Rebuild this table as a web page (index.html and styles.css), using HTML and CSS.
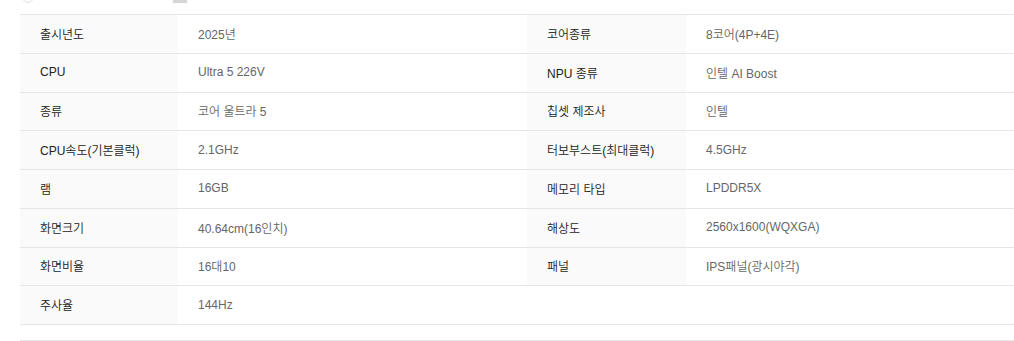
FILE: index.html
```html
<!DOCTYPE html>
<html lang="ko">
<head>
<meta charset="utf-8">
<link rel="stylesheet" href="styles.css">
</head>
<body>
<div class="top">
  <span class="dot"></span>
  <span class="tab"></span>
</div>
<div class="spec">
  <div class="row">
    <div class="th">출시년도</div><div class="td">2025년</div>
    <div class="th">코어종류</div><div class="td">8코어(4P+4E)</div>
  </div>
  <div class="row">
    <div class="th">CPU</div><div class="td">Ultra 5 226V</div>
    <div class="th">NPU 종류</div><div class="td">인텔 AI Boost</div>
  </div>
  <div class="row">
    <div class="th">종류</div><div class="td">코어 울트라 5</div>
    <div class="th">칩셋 제조사</div><div class="td">인텔</div>
  </div>
  <div class="row">
    <div class="th">CPU속도(기본클럭)</div><div class="td">2.1GHz</div>
    <div class="th">터보부스트(최대클럭)</div><div class="td">4.5GHz</div>
  </div>
  <div class="row">
    <div class="th">램</div><div class="td">16GB</div>
    <div class="th">메모리 타입</div><div class="td">LPDDR5X</div>
  </div>
  <div class="row">
    <div class="th">화면크기</div><div class="td">40.64cm(16인치)</div>
    <div class="th">해상도</div><div class="td">2560x1600(WQXGA)</div>
  </div>
  <div class="row">
    <div class="th">화면비율</div><div class="td">16대10</div>
    <div class="th">패널</div><div class="td">IPS패널(광시야각)</div>
  </div>
  <div class="row">
    <div class="th">주사율</div><div class="td">144Hz</div>
    <div class="blank"></div><div class="blank"></div>
  </div>
</div>
<div class="next"></div>
</body>
</html>
```

FILE: styles.css
```css
* { box-sizing: border-box; }
html, body {
  margin: 0;
  padding: 0;
  background: #fff;
}
body {
  font-family: "Liberation Sans", "Noto Sans CJK KR", sans-serif;
  font-size: 12px;
  font-weight: 350;
  color: #333;
}
.top {
  height: 14px;
  overflow: hidden;
  display: flex;
  align-items: flex-start;
  padding-left: 22px;
}
.dot {
  width: 12px;
  height: 12px;
  border-radius: 50%;
  border: 1px solid #e2e2e2;
  margin-top: -9px;
}
.tab {
  width: 14px;
  height: 3px;
  background: #d6d6d6;
  margin-left: 139px;
}
.spec {
  margin-left: 20px;
  border-top: 1px solid #e6e6e6;
}
.row {
  display: grid;
  grid-template-columns: 158px 349px 159px 1fr;
  height: 38.75px;
  border-bottom: 1px solid #e6e6e6;
}
.th, .td {
  display: flex;
  align-items: center;
  padding-left: 20px;
  padding-bottom: 1px;
  white-space: nowrap;
}
.th {
  background: #fafafa;
  color: #222;
}
.td {
  color: #666;
}
.next {
  margin-left: 20px;
  margin-top: 15px;
  border-top: 1px solid #e6e6e6;
  height: 1px;
}
```
